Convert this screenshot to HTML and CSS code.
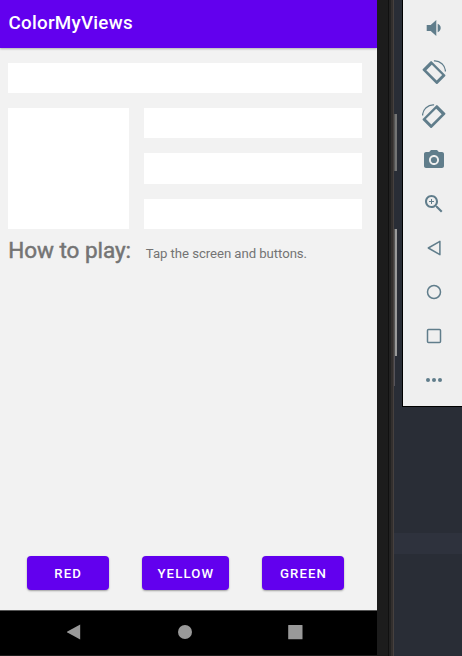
FILE: index.html
```html
<!DOCTYPE html>
<html lang="en">
<head>
<meta charset="utf-8">
<title>ColorMyViews</title>
<link rel="stylesheet" href="styles.css">
</head>
<body>
<div class="workspace">
  <main class="screen">
    <header class="app-bar">ColorMyViews</header>
    <section class="content">
      <div class="box box-one"></div>
      <div class="box-grid">
        <div class="box"></div>
        <div class="box-stack">
          <div class="box"></div>
          <div class="box"></div>
          <div class="box"></div>
        </div>
      </div>
      <div class="help">
        <span class="help-label">How to play:</span>
        <span class="help-text">Tap the screen and buttons.</span>
      </div>
      <div class="actions">
        <button class="btn">RED</button>
        <button class="btn btn-wide">YELLOW</button>
        <button class="btn">GREEN</button>
      </div>
    </section>
    <nav class="nav-bar">
      <svg width="16" height="16" viewBox="0 0 16 16"><path d="M14.2 .5v15L1.400 8.600q-1-.6 0-1.200z"/></svg>
      <svg width="16" height="16" viewBox="0 0 16 16"><circle cx="8" cy="8" r="7"/></svg>
      <svg width="16" height="16" viewBox="0 0 16 16"><rect x="1.200" y="1" width="14.300" height="14.300" rx=".5"/></svg>
    </nav>
  </main>
  <div class="bezel"></div>
  <div class="desk">
    <div class="side-keys">
      <i class="key key-power"></i>
      <i class="key key-volume"></i>
      <i class="key key-edge"></i>
    </div>
    <aside class="toolbar">
      <svg viewBox="0 0 24 24"><path d="M4.700 9h4l5.600-5v16l-5.600-5h-4z"/><path d="M15.700 7.800c1.900.8 3 2.300 3 4.200s-1.100 3.400-3 4.200z"/></svg>
      <svg viewBox="-1 -1 26 26"><path fill-rule="evenodd" d="M0 10.300q-.8-.8 0-1.600L8.100.6q.8-.8 1.600 0L24 14.900q.8.8 0 1.600L15.900 24.600q-.8.8-1.600 0zM3.700 10 14.900 21.200 20.800 15.300 9.600 4.100z"/><path class="arc" d="M11.900 0C18.500-.6 24.300 4.700 24.400 11.500"/></svg>
      <svg viewBox="-1 -1 26 26"><g transform="translate(24 0) scale(-1 1)"><path fill-rule="evenodd" d="M0 10.300q-.8-.8 0-1.600L8.100.6q.8-.8 1.600 0L24 14.900q.8.8 0 1.600L15.900 24.600q-.8.8-1.600 0zM3.700 10 14.900 21.200 20.800 15.300 9.600 4.100z"/><path class="arc" d="M11.900 0C18.500-.6 24.300 4.700 24.400 11.500"/></g></svg>
      <svg viewBox="0 0 24 24"><path fill-rule="evenodd" d="M9 2 7.170 4H4c-1.100 0-2 .9-2 2v12c0 1.100.9 2 2 2h16c1.100 0 2-.9 2-2V6c0-1.100-.9-2-2-2h-3.170L15 2zm3 15c-2.760 0-5-2.240-5-5s2.240-5 5-5 5 2.240 5 5-2.240 5-5 5z"/><circle cx="12" cy="12" r="3.100"/></svg>
      <svg viewBox="0 0 24 24"><path d="M15.500 14h-.79l-.28-.27C15.410 12.590 16 11.110 16 9.500 16 5.910 13.090 3 9.500 3S3 5.910 3 9.500 5.910 16 9.500 16c1.610 0 3.090-.59 4.230-1.570l.27.28v.79l5 4.990L20.490 19zm-6 0C7.010 14 5 11.990 5 9.500S7.010 5 9.500 5 14 7.010 14 9.500 11.990 14 9.500 14zM9 7h1v2h2v1h-2v2H9v-2H7V9h2z"/></svg>
      <svg class="line" viewBox="0 0 24 24"><path d="M17.900 5.300v13.400L6.300 12z"/></svg>
      <svg class="line" viewBox="0 0 24 24"><circle cx="12" cy="12" r="6.500"/></svg>
      <svg class="line" viewBox="0 0 24 24"><rect x="5.500" y="5.500" width="13" height="13" rx="1"/></svg>
      <svg viewBox="0 0 24 24"><circle cx="6" cy="12" r="2"/><circle cx="12" cy="12" r="2"/><circle cx="18" cy="12" r="2"/></svg>
    </aside>
  </div>
</div>
</body>
</html>
```
FILE: styles.css
```css
* { box-sizing: border-box; }
body { margin: 0; font-family: Roboto, "Liberation Sans", sans-serif; }
.workspace { display: flex; width: 462px; height: 656px; overflow: hidden; background: #292d36; }
.screen { display: flex; flex-direction: column; width: 377px; background: #f2f2f2; }
.app-bar {
  height: 48px;
  padding: 0 8.500px;
  color: #fff;
  background: #6200ee;
  box-shadow: 0 1px 2px rgba(0, 0, 0, .28);
  font-size: 18.800px;
  font-weight: 500;
  line-height: 46px;
  letter-spacing: .26px;
}
.content { flex: 1; display: flex; flex-direction: column; padding: 15px 15px 20px 8.300px; }
.box { background: #fff; }
.box-one { height: 30px; }
.box-grid { display: grid; grid-template-columns: 121px 1fr; gap: 15px; height: 121px; margin-top: 15px; }
.box-stack { display: grid; grid-template-rows: repeat(3, 1fr); gap: 15px; }
.help { display: flex; align-items: baseline; height: 44px; padding-top: 7px; color: #747474; white-space: nowrap; }
.help-label { width: 137.500px; font-size: 22.500px; line-height: 28px; letter-spacing: -.04px; -webkit-text-stroke: .5px #747474; }
.help-text { font-size: 13.200px; letter-spacing: -.06px; }
.actions { display: flex; justify-content: space-between; margin: auto 18px 0 18.300px; }
.btn {
  width: 82px;
  height: 34px;
  padding: 1px 0 0 1px;
  border: 0;
  border-radius: 4px;
  color: #fff;
  background: #6200ee;
  box-shadow: 0 1px 2px rgba(0, 0, 0, .35);
  font: 500 13.200px/33px Roboto, sans-serif;
  letter-spacing: 1.100px;
}
.btn-wide { width: 87px; }
.nav-bar {
  display: flex;
  align-items: center;
  justify-content: space-between;
  height: 46px;
  padding: 0 74px 2px 66px;
  border-top: 1px solid #555;
  border-bottom: 1px solid #1c1c1c;
  background: #000;
  fill: #999;
}
.bezel {
  width: 17px;
  background: linear-gradient(90deg, #1c1c1c 0 11px, #101010 11px 12px, #222 12px 14px, #332f2e 14px 16px, #46413f 16px);
}
.desk {
  display: flex;
  align-items: flex-start;
  width: 68px;
  background: linear-gradient(#292d36 0 533px, #2e323d 533px 554px, #292d36 554px);
}
.side-keys { display: flex; flex-direction: column; width: 8px; padding-top: 114px; }
.key { width: 3px; background: linear-gradient(90deg, #555 0 1px, #747474 1px); }
.key-power { height: 57px; }
.key-volume { height: 127px; margin-top: 58px; background: linear-gradient(90deg, #555 0 1px, #999 1px); }
.key-edge { width: 1px; height: 30px; background: #55535a; }
.toolbar {
  display: flex;
  flex-direction: column;
  align-items: center;
  gap: 20px;
  width: 60px;
  height: 407px;
  padding: 16px 0 0 3px;
  border: solid #000;
  border-width: 0 0 1px 1px;
  background: #efefef;
  fill: #607d8b;
}
.toolbar svg { flex: none; width: 24px; height: 24px; }
.arc { fill: none; stroke: #607d8b; stroke-width: 1.400; }
.toolbar .line { fill: none; stroke: #607d8b; stroke-width: 1.500; stroke-linejoin: round; }
```
